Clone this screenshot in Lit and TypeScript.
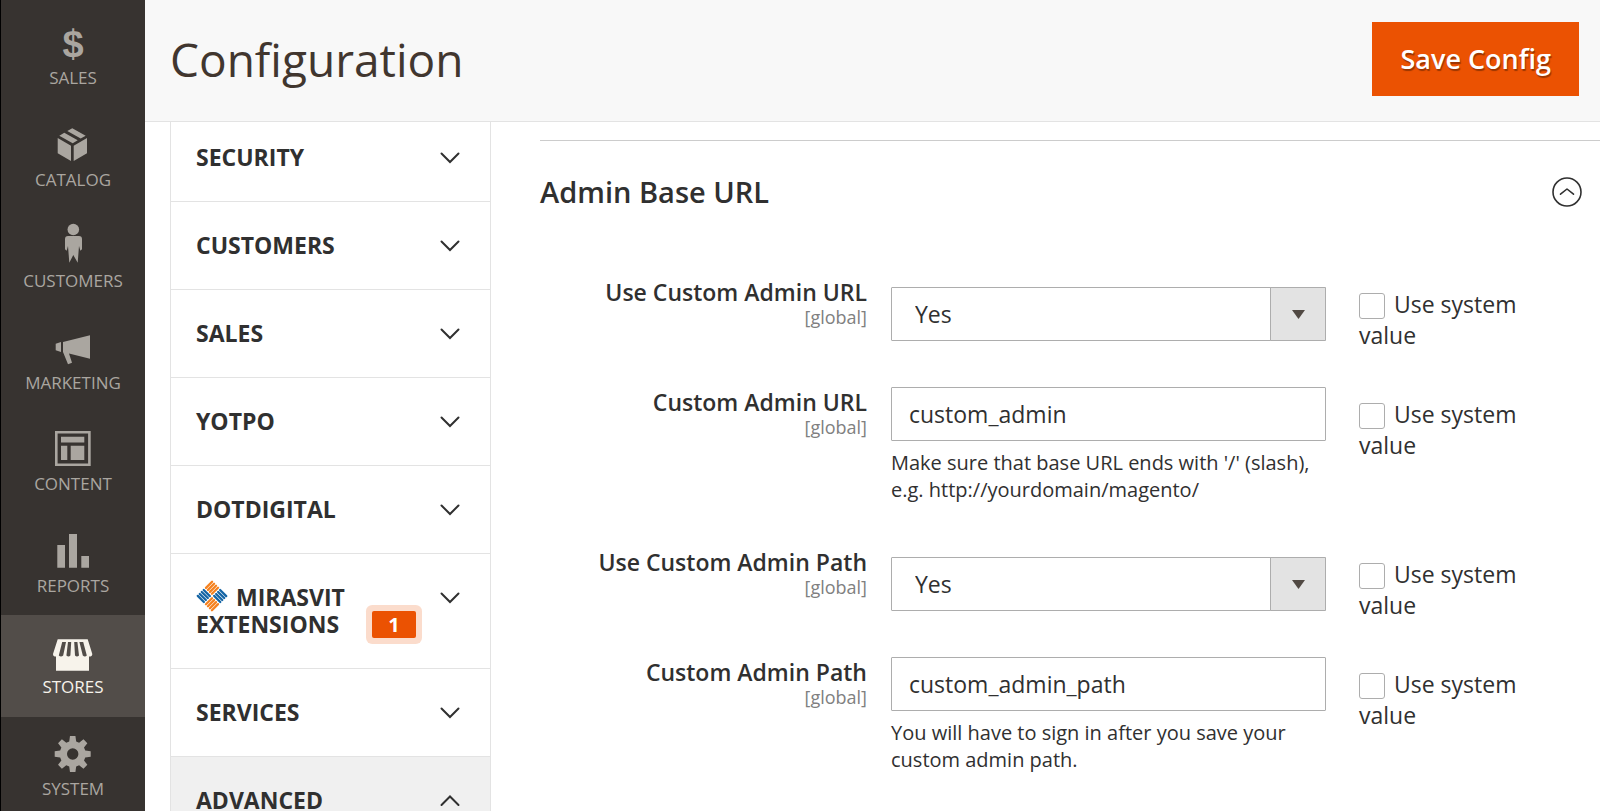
import { LitElement, html, css, svg, nothing } from "lit";
import { customElement, state } from "lit/decorators.js";

interface NavItem { label: string; icon: unknown; active?: boolean }
interface Tab { label: string; badge?: number; open?: boolean }
interface Field { id: string; label: string; kind: "select" | "text"; value: string; hint?: string }

function gearPath(cx: number, cy: number, inner: number, outer: number): string {
  const points: string[] = [];
  for (let i = 0; i < 8; i++) {
    const a = (i * Math.PI) / 4;
    const at = (r: number, da: number) =>
      `${(cx + r * Math.sin(a + da)).toFixed(2)} ${(cy - r * Math.cos(a + da)).toFixed(2)}`;
    points.push(at(inner, -0.27), at(outer, -0.15), at(outer, 0.15), at(inner, 0.27));
  }
  return `M${points.join("L")}Z`;
}

const shape = (content: unknown) =>
  html`<svg class="icon" viewBox="0 0 40 40" width="40" height="40" aria-hidden="true">${content}</svg>`;

const NAV: NavItem[] = [
  { label: "Sales", icon: html`<span class="icon dollar" aria-hidden="true">$</span>` },
  { label: "Catalog", icon: shape(svg`<path d="M4.7 13 18 20.7V36L4.7 28.3ZM20.7 20.7 34 13V28.3L20.7 36ZM14.3 6 19.3 3.3 32.7 10.7 27.7 13.5ZM6.3 10.7 11.3 7.7 24.7 15.3 19.7 18.3Z"/>`) },
  { label: "Customers", icon: shape(svg`<circle cx="20.3" cy="3.5" r="5.8"/><path d="M12 13Q12 10 15 10H26Q29 10 29 13V23.3L27.3 24.8 26 20 24.7 36.7 20.3 29 16.3 36.7 15 20 13.7 24.8 12 23.3Z"/>`) },
  { label: "Marketing", icon: shape(svg`<path d="M2.7 15.7 8 14V24L2.7 22.3ZM10 14 37 7.3V30.7L16 25.5 19 34.7 15 36.3 10 24Z"/>`) },
  { label: "Content", icon: shape(svg`<path fill-rule="evenodd" d="M2 2H37.7V37H2ZM4.6 4.6V34.4H35.1V4.6Z"/><path d="M8 7.7H31.3V13.4H8ZM8 16.7H14.3V31H8ZM17.7 16.7H31.3V31H17.7Z"/>`) },
  { label: "Reports", icon: shape(svg`<path d="M4.3 14H12V36.7H4.3ZM16 3H24V36.7H16ZM28.3 25H36V36.7H28.3Z"/>`) },
  { label: "Stores", active: true, icon: shape(svg`<path d="M4.7 7.3H34.7L39.3 22Q39.3 24.6 36 24.6V38.7H3V24.6Q0 24.6 0 22Z"/><path class="gap" d="M9.2 10H13L10.2 23.6Q8 25.4 5.8 23.6ZM15 10H18.2L17.4 23.6Q15.6 25.4 13.4 23.6ZM21.2 10H24.4L26 23.6Q24 25.4 22 23.6ZM26.4 10H30.2L33.8 23.6Q32 25.4 29.8 23.6Z"/>`) },
  { label: "System", icon: shape(svg`<path fill-rule="evenodd" d="${gearPath(19.7, 20, 13, 18.2)}M14 20a5.7 5.7 0 1 0 11.4 0a5.7 5.7 0 1 0 -11.4 0Z"/>`) },
];

const TABS: Tab[] = [
  { label: "Security" },
  { label: "Customers" },
  { label: "Sales" },
  { label: "Yotpo" },
  { label: "Dotdigital" },
  { label: "Mirasvit Extensions", badge: 1 },
  { label: "Services" },
  { label: "Advanced", open: true },
];

const FIELDS: Field[] = [
  { id: "use_custom", label: "Use Custom Admin URL", kind: "select", value: "Yes" },
  { id: "custom", label: "Custom Admin URL", kind: "text", value: "custom_admin",
    hint: "Make sure that base URL ends with '/' (slash), e.g. http://yourdomain/magento/" },
  { id: "use_custom_path", label: "Use Custom Admin Path", kind: "select", value: "Yes" },
  { id: "custom_path", label: "Custom Admin Path", kind: "text", value: "custom_admin_path",
    hint: "You will have to sign in after you save your custom admin path." },
];

@customElement("admin-menu")
export class AdminMenu extends LitElement {
  static styles = css`
    :host { display: block; background: #373330; border-left: 1px solid #000; overflow: hidden; }
    .list { list-style: none; margin: 0; padding: 6px 0 0; }
    .item { height: 102px; }
    .item:nth-child(even) { height: 101px; }
    .link {
      display: flex; flex-direction: column; align-items: center; gap: 4px;
      height: 100%; box-sizing: border-box; padding-top: 17px;
      color: #aaa6a0; text-decoration: none; text-transform: uppercase;
      font-size: 17px; line-height: 22px;
    }
    .active { background: #524d49; color: #f7f3eb; }
    .icon { width: 40px; height: 40px; fill: currentColor; overflow: visible; flex: none; }
    .gap { fill: #524d49; }
    .dollar { font: bold 38px/43px "Liberation Sans", sans-serif; text-align: center; }
  `;
  render() {
    return html`<nav aria-label="Admin menu"><ul class="list">
      ${NAV.map((n) => html`<li class="item">
        <a class="link ${n.active ? "active" : ""}" href="#${n.label.toLowerCase()}">${n.icon}<span>${n.label}</span></a>
      </li>`)}
    </ul></nav>`;
  }
}

@customElement("config-tabs")
export class ConfigTabs extends LitElement {
  static styles = css`
    :host { display: block; border: 1px solid #e3e3e3; border-width: 0 1px; box-sizing: border-box; }
    .tab {
      display: flex; justify-content: space-between; align-items: flex-start; gap: 16px;
      width: 100%; padding: 30px 30px 30px 25px; margin: 0;
      border: 0; border-bottom: 1px solid #e3e3e3; background: #fff; color: #303030;
      font: bold 23px/27px "Open Sans", sans-serif; text-transform: uppercase; text-align: left; cursor: pointer;
    }
    .open { background: #f0f0f0; }
    .text { display: flex; flex: 1; align-items: flex-end; justify-content: space-between; }
    .logo { width: 32px; height: 32px; margin: -8px 8px -8px 0; vertical-align: 2px; }
    .badge {
      background: #eb5202; color: #fff; border-radius: 2px; box-shadow: 0 0 0 6px #fbdccc;
      font-size: 20px; width: 44px; flex: none; text-align: center; margin-right: 8px;
    }
    .chevron { width: 20px; height: 12px; margin-top: 8px; fill: none; stroke: #303030; stroke-width: 2; stroke-linecap: round; flex: none; }
  `;
  private logo() {
    const stripes = [-4.2, -1.4, 1.4, 4.2];
    const group = (cx: number, cy: number, angle: number, color: string) => svg`
      <g transform="translate(${cx} ${cy}) rotate(${angle})" stroke=${color}>
        ${stripes.map((y) => svg`<path d="M-4.3 ${y}H4.3"/>`)}
      </g>`;
    return html`<svg class="logo" viewBox="0 0 32 32" stroke-width="2.3" stroke-linecap="round" aria-hidden="true">
      ${group(16, 7.8, -45, "#f58220")}${group(7.8, 16, 45, "#1565a5")}
      ${group(24.2, 16, 45, "#1565a5")}${group(16, 24.2, -45, "#f58220")}
    </svg>`;
  }
  render() {
    return TABS.map((t) => html`<button class="tab ${t.open ? "open" : ""}" type="button" aria-expanded=${t.open ? "true" : "false"}>
      <span class="text">
        <span>${t.badge ? this.logo() : nothing}${t.label}</span>
        ${t.badge ? html`<span class="badge">${t.badge}</span>` : nothing}
      </span>
      <svg class="chevron" viewBox="0 0 20 12" aria-hidden="true"><path d=${t.open ? "M1.5 10 10 1.5 18.5 10" : "M1.5 1.5 10 10 18.5 1.5"}/></svg>
    </button>`);
  }
}

@customElement("config-section")
export class ConfigSection extends LitElement {
  static styles = css`
    :host { display: block; }
    .section { border-top: 1px solid #ccc; margin-top: 18px; }
    .head { display: flex; justify-content: space-between; align-items: center; padding: 31px 18px 0 0; }
    .title { margin: 0; font-size: 29px; font-weight: 600; line-height: 40px; color: #303030; }
    .toggle { width: 30px; height: 30px; padding: 0; border: 0; background: none; cursor: pointer; }
    .ring { display: block; fill: none; stroke: #303030; stroke-width: 1.6; stroke-linecap: round; stroke-linejoin: round; }
    .fields { padding-top: 65px; }
    .row { display: grid; grid-template-columns: 351fr 435fr 241fr 33px; margin-bottom: 36px; }
    .label { text-align: right; padding: 0 24px 0 0; line-height: 25px; margin-top: 3px; font-weight: 600; }
    .scope { display: block; color: #808080; font-size: 18px; font-weight: 400; }
    .control {
      width: 100%; height: 54px; box-sizing: border-box; margin: 0; border: 1px solid #adadad; border-radius: 1px;
      background: #fff; color: #303030; font: 23px/30px "Open Sans", sans-serif; padding: 0 17px; appearance: none; outline: 0;
    }
    .picker { display: grid; grid-template-columns: 1fr 56px; margin-top: 10px; }
    .select { grid-area: 1 / 1 / 2 / 3; padding-left: 23px; }
    .arrow {
      grid-area: 1 / 2; display: grid; place-items: center; pointer-events: none;
      background: #e3e3e3; border: 1px solid #adadad; border-radius: 1px;
    }
    .triangle { fill: #514943; display: block; }
    .hint { margin: 8px 0; font-size: 20px; line-height: 27px; }
    .system { padding: 12px 0 0 33px; line-height: 31px; }
    .box {
      appearance: none; width: 26px; height: 26px; margin: 0 9px 0 0; border: 1px solid #adadad; border-radius: 3px;
      background: #fff; vertical-align: -6px;
    }
    .box:checked { background: #514943; }
  `;
  private row(f: Field) {
    return html`<div class="row">
      <label class="label" for=${f.id}>${f.label}<span class="scope">[global]</span></label>
      <div>
        ${f.kind === "select"
          ? html`<div class="picker">
              <select class="control select" id=${f.id}><option selected>Yes</option><option>No</option></select>
              <span class="arrow"><svg class="triangle" width="13" height="9" viewBox="0 0 13 9" aria-hidden="true"><path d="M0 0H13L6.5 9Z"/></svg></span>
            </div>`
          : html`<input class="control" id=${f.id} type="text" .value=${f.value} />`}
        ${f.hint ? html`<p class="hint">${f.hint}</p>` : nothing}
      </div>
      <div class="system"><input class="box" type="checkbox" id="${f.id}_inherit" /><label for="${f.id}_inherit">Use system value</label></div>
    </div>`;
  }
  @state() private open = true;
  render() {
    return html`<section class="section">
      <div class="head">
        <h2 class="title">Admin Base URL</h2>
        <button class="toggle" type="button" aria-label="Toggle section" aria-expanded=${this.open ? "true" : "false"} @click=${() => (this.open = !this.open)}>
          <svg class="ring" width="30" height="30" viewBox="0 0 30 30"><circle cx="15" cy="15" r="14"/><path d="M8.5 17.2 15 12 21.5 17.2"/></svg>
        </button>
      </div>
      ${this.open ? html`<div class="fields">${FIELDS.map((f) => this.row(f))}</div>` : nothing}
    </section>`;
  }
}

@customElement("app-root")
export class AppRoot extends LitElement {
  static styles = css`
    :host {
      display: grid; grid-template-columns: 145px 1fr; height: 100vh; overflow: hidden;
      background: #fff; color: #303030; font: 23px/31px "Open Sans", sans-serif;
    }
    .page { display: flex; flex-direction: column; min-width: 0; min-height: 0; }
    .header {
      display: flex; justify-content: space-between; align-items: center; flex: none;
      padding: 22px 21px 25px 25px; background: #f8f8f8; border-bottom: 1px solid #e3e3e3;
    }
    .heading { margin: 0; font-size: 46px; line-height: 64px; font-weight: 400; color: #41362f; }
    .save {
      border: 1px solid #eb5202; background: #eb5202; color: #fff; height: 74px; padding: 0 27px;
      font: 600 27px/40px "Open Sans", sans-serif; text-shadow: 1px 2px 1px rgba(0, 0, 0, 0.35); cursor: pointer;
    }
    .body { display: grid; grid-template-columns: 321px 1fr; gap: 49px; padding-left: 25px; overflow: hidden; flex: 1; min-height: 0; }
    .tabs { margin-top: -8px; }
  `;
  render() {
    return html`
      <admin-menu></admin-menu>
      <div class="page">
        <header class="header"><h1 class="heading">Configuration</h1><button class="save" type="button">Save Config</button></header>
        <main class="body"><config-tabs class="tabs"></config-tabs><config-section></config-section></main>
      </div>`;
  }
}
